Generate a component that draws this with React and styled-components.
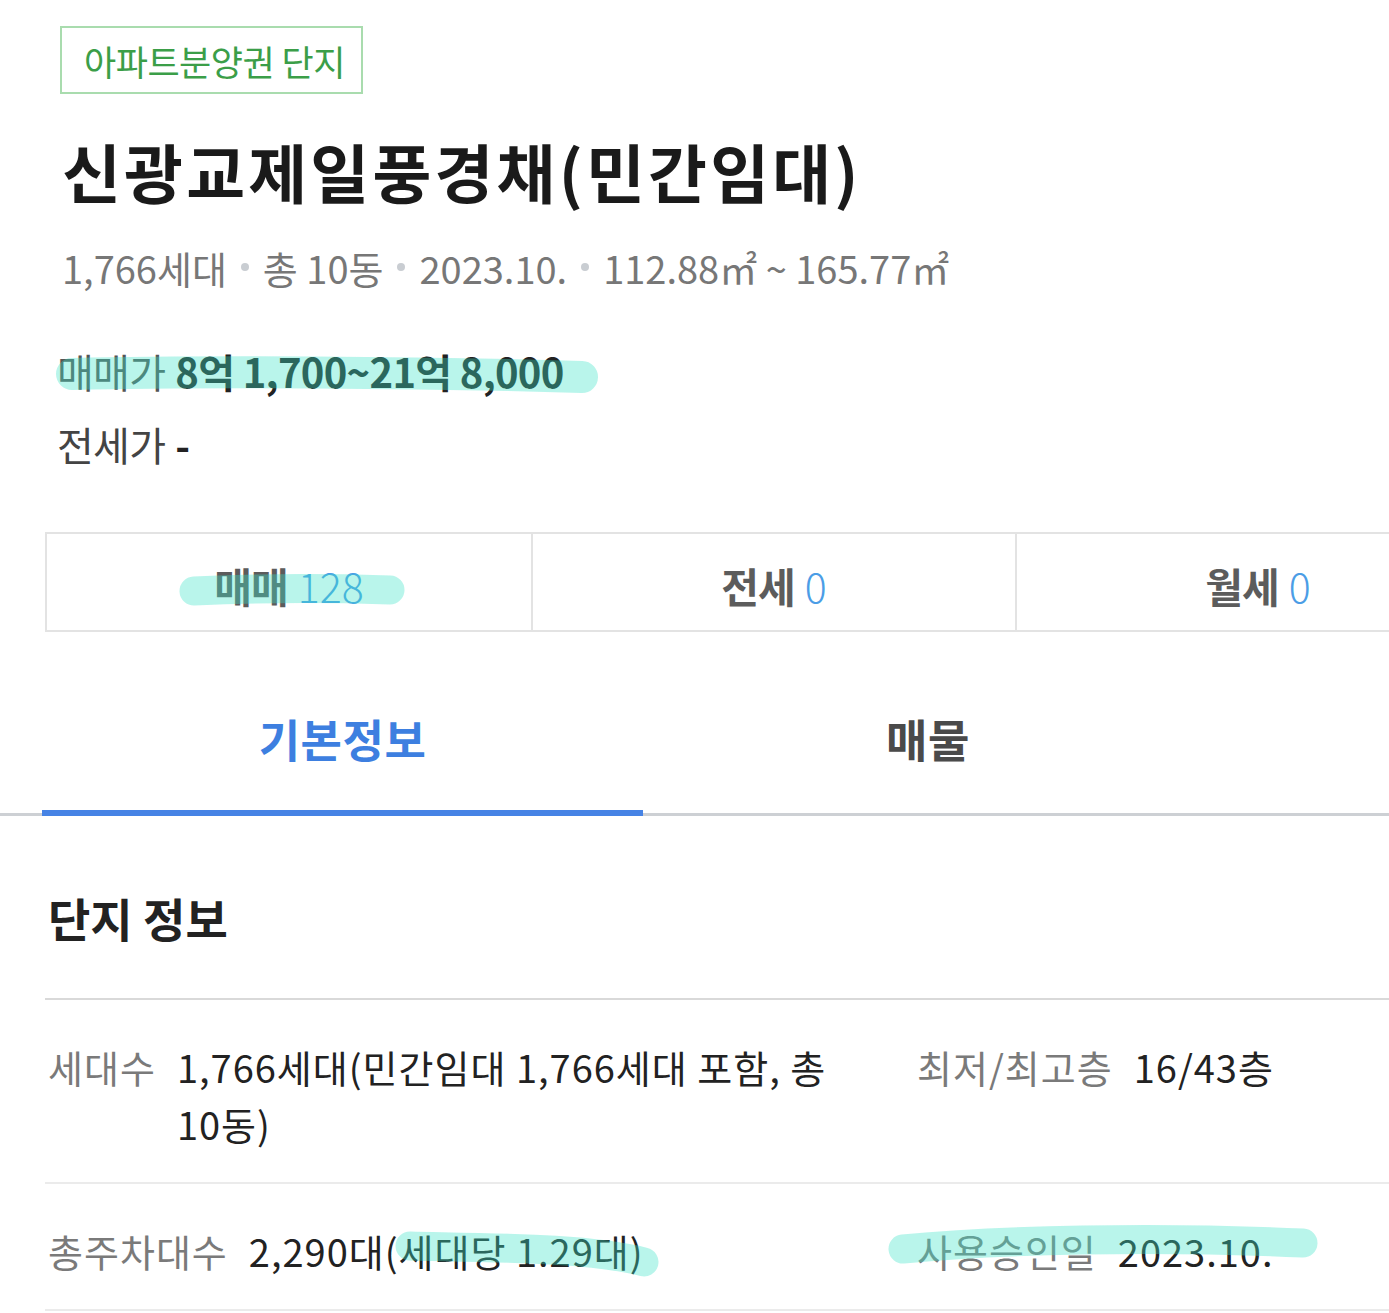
import React from 'react';
import styled, { createGlobalStyle } from 'styled-components';

const GlobalStyle = createGlobalStyle`
  html, body {
    margin: 0;
    padding: 0;
    background: #ffffff;
    overflow: hidden;
  }
  body {
    font-family: 'Noto Sans CJK KR', 'Noto Sans', sans-serif;
    color: #222222;
  }
`;

const stats = [
    {label: '매매', count: 128},
    {label: '전세', count: 0},
    {label: '월세', count: 0},
];

// hand-drawn highlighter strokes laid over the screenshot
const marks = [
    'M72 374 C 200 371, 420 372, 582 377',
    'M194 591 C 260 588, 330 588, 390 590',
    'M410 1246 C 500 1248, 590 1248, 644 1262',
    'M903 1249 C 1000 1240, 1150 1236, 1303 1243',
];

export default function App() {
    return (
        <Page>
            <GlobalStyle/>
            <Header>
                <Badge>아파트분양권 단지</Badge>
                <Title>신광교제일풍경채(민간임대)</Title>
                <Summary>
                    <span>1,766세대</span>
                    <Dot/>
                    <span>총 10동</span>
                    <Dot/>
                    <span>2023.10.</span>
                    <Dot/>
                    <span>112.88㎡ ~ 165.77㎡</span>
                </Summary>
                <PriceLine $first>
                    <PriceLabel>매매가</PriceLabel>
                    <PriceValue>8억 1,700~21억 8,000</PriceValue>
                </PriceLine>
                <PriceLine>
                    <PriceLabel $dark>전세가</PriceLabel>
                    <PriceValue>-</PriceValue>
                </PriceLine>
            </Header>

            <StatBox>
                {stats.map(s => (
                    <StatCell key={s.label}>
                        <StatLabel>{s.label}</StatLabel>
                        <StatCount>{s.count}</StatCount>
                    </StatCell>
                ))}
            </StatBox>

            <TabBar>
                <Tab $active $width={601}>기본정보</Tab>
                <Tab $width={570}>매물</Tab>
            </TabBar>

            <SectionTitle>단지 정보</SectionTitle>

            <InfoTable>
                <InfoRow>
                    <InfoCell>
                        <InfoLabel>세대수</InfoLabel>
                        <InfoValue>1,766세대(민간임대 1,766세대 포함, 총 10동)</InfoValue>
                    </InfoCell>
                    <InfoCell>
                        <InfoLabel>최저/최고층</InfoLabel>
                        <InfoValue>16/43층</InfoValue>
                    </InfoCell>
                </InfoRow>
                <InfoRow>
                    <InfoCell>
                        <InfoLabel>총주차대수</InfoLabel>
                        <InfoValue>2,290대(세대당 1.29대)</InfoValue>
                    </InfoCell>
                    <InfoCell>
                        <InfoLabel>사용승인일</InfoLabel>
                        <InfoValue>2023.10.</InfoValue>
                    </InfoCell>
                </InfoRow>
            </InfoTable>

            <Marks width="1389" height="1313" viewBox="0 0 1389 1313">
                {marks.map((d, i) => (
                    <path key={i} d={d} fill="none" stroke="rgba(60, 226, 200, 0.36)"
                          strokeWidth={i === 0 ? 32 : 29} strokeLinecap="round"/>
                ))}
            </Marks>
        </Page>
    );
}

const Page = styled.div`
  position: relative;
  width: 1389px;
  height: 1313px;
  overflow: hidden;
  padding-left: 45px;
  box-sizing: border-box;
`;

const Header = styled.div`
  display: flex;
  flex-direction: column;
  align-items: flex-start;
  padding-top: 26px;
  padding-left: 15px;
`;

const Badge = styled.div`
  display: inline-flex;
  align-items: center;
  box-sizing: border-box;
  height: 68px;
  padding: 0 16px 0 22px;
  border: 2px solid #a9dcae;
  color: #3b9e48;
  font-size: 35px;
  letter-spacing: -0.5px;
`;

const Title = styled.h1`
  margin: 36px 0 0 2px;
  font-size: 64px;
  line-height: 80px;
  font-weight: 700;
  color: #1a1a1a;
  letter-spacing: 3.2px;
`;

const Summary = styled.div`
  display: flex;
  align-items: center;
  margin: 32px 0 0 2px;
  height: 50px;
  font-size: 38px;
  letter-spacing: 0;
  color: #777777;
`;

const Dot = styled.span`
  display: inline-block;
  width: 8px;
  height: 8px;
  border-radius: 50%;
  background: #c9cdd2;
  margin: 0 14px 0 14px;
`;

const PriceLine = styled.div`
  display: flex;
  align-items: center;
  gap: 10px;
  height: 73px;
  margin-top: ${p => (p.$first ? '42px' : '0')};
  margin-left: -3px;
  font-size: 40px;
  letter-spacing: -0.7px;
`;

const PriceLabel = styled.span`
  color: ${p => (p.$dark ? '#444444' : '#555555')};
`;

const PriceValue = styled.span`
  font-weight: 700;
  color: #222222;
`;

const StatBox = styled.div`
  display: grid;
  grid-template-columns: repeat(3, 484px);
  margin-top: 52px;
  width: 1452px;
  height: 100px;
  box-sizing: border-box;
  border: 2px solid #e3e3e3;
`;

const StatCell = styled.div`
  display: flex;
  align-items: center;
  justify-content: center;
  gap: 10px;
  padding-top: 6px;
  font-size: 41px;

  & + & {
    border-left: 2px solid #e3e3e3;
  }
`;

const StatLabel = styled.span`
  font-weight: 700;
  color: #5c5c5c;
  letter-spacing: -1px;
`;

const StatCount = styled.span`
  color: #4b9de6;
  font-weight: 300;
`;

const TabBar = styled.div`
  display: flex;
  margin: 32px 0 0 -45px;
  padding-left: 42px;
  width: 1389px;
  box-sizing: border-box;
  border-bottom: 3px solid #cdd0d4;
`;

const Tab = styled.div`
  position: relative;
  display: flex;
  align-items: center;
  justify-content: center;
  width: ${p => p.$width}px;
  height: 149px;
  font-size: 45px;
  font-weight: 700;
  letter-spacing: 0.5px;
  color: ${p => (p.$active ? '#3d7fe0' : '#4a4a4a')};

  &::after {
    content: '';
    display: ${p => (p.$active ? 'block' : 'none')};
    position: absolute;
    left: 0;
    right: 0;
    bottom: -3px;
    height: 6px;
    background: #4683e5;
  }
`;

const SectionTitle = styled.h2`
  margin: 70px 0 50px 3px;
  font-size: 46px;
  line-height: 62px;
  font-weight: 700;
  color: #222222;
`;

const InfoTable = styled.div`
  border-top: 2px solid #d9d9d9;
  width: 1452px;
`;

const InfoRow = styled.div`
  display: grid;
  grid-template-columns: 869px 1fr;
  padding: 38px 0 30px;
  border-bottom: 2px solid #ebebeb;
`;

const InfoCell = styled.div`
  display: flex;
  align-items: flex-start;
  gap: 21px;
  padding: 0 30px 0 3px;
  font-size: 38px;
  line-height: 57px;
  letter-spacing: 1px;
`;

const InfoLabel = styled.span`
  flex: none;
  color: #7a7a7a;
`;

const InfoValue = styled.span`
  flex: 1;
  color: #222222;
  word-break: keep-all;
`;

const Marks = styled.svg`
  position: absolute;
  left: 0;
  top: 0;
  pointer-events: none;
`;
